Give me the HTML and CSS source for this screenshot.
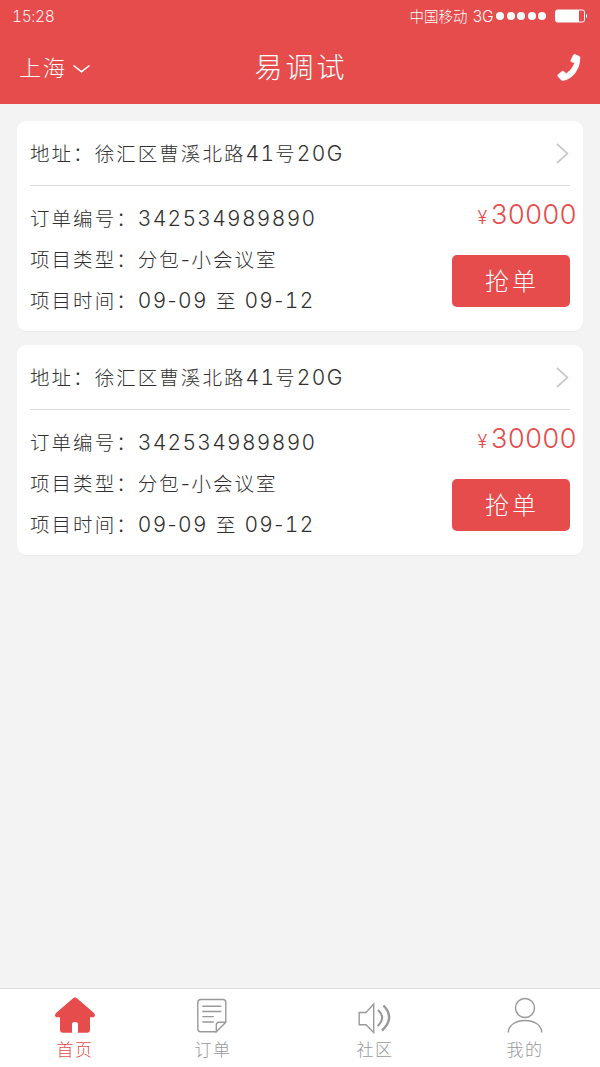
FILE: index.html
```html
<!DOCTYPE html>
<html lang="zh-CN">
<head>
<meta charset="utf-8">
<title>易调试</title>
<link rel="stylesheet" href="styles.css">
</head>
<body>
<div class="app">
  <header class="header">
    <div class="status">
      <span class="clock">15:28</span>
      <div class="signal">
        <span class="carrier">中国移动 <span class="net">3G</span></span>
        <span class="dots"><i></i><i></i><i></i><i></i><i></i></span>
        <svg class="battery" width="33" height="14" viewBox="0 0 33 14"><rect x=".5" y="1" width="29" height="12" rx="2" fill="none" stroke="#fff"/><path d="M2.5 1H24v12H2.5Q.5 13 .5 11V3Q.5 1 2.5 1Z" fill="#fff"/><path d="M31 5q1.2.3 1.2 2T31 9Z" fill="#fff"/></svg>
      </div>
    </div>
    <div class="nav">
      <div class="city"><span>上海</span><svg width="19" height="10" viewBox="0 0 19 10"><path d="M1.5 1.5L9.500 7.700L17.500 1.500" fill="none" stroke="#fff" stroke-width="1.500"/></svg></div>
      <h1 class="title">易调试</h1>
      <svg class="phone" width="24" height="28" viewBox="0 0 24 28"><path d="M18 .5L22 2.200Q23 2.700 23 4Q23 12 18.200 18.800Q13.500 25 6.300 26.500Q5 26.800 4.100 25.800L.9 22.300Q.2 21.400 1.100 20.500L5.100 17.400Q6 16.800 6.800 17.500L9.200 19.700Q15.500 15.500 17.600 8.800L14.500 7.800Q13.500 7.400 13.800 6.400L16.300 1.200Q16.800.2 18 .5Z" fill="#fff" stroke="#fff" stroke-width=".6"/></svg>
    </div>
  </header>
  <main class="list">
    <section class="card">
      <div class="address"><p class="row">地址：徐汇区曹溪北路<span class="num">41</span>号<span class="num">20G</span></p>
        <svg width="14" height="22" viewBox="0 0 14 22"><path d="M1 2L11.500 11.500L1 21" fill="none" stroke="#c9c9c9" stroke-width="1.700"/></svg></div>
      <div class="body">
        <div class="details">
          <p class="row">订单编号：<span class="num">342534989890</span></p>
          <p class="row">项目类型：分包<span class="dash">-</span>小会议室</p>
          <p class="row">项目时间：<span class="num">09<span class="dash">-</span>09</span><span class="to">至</span><span class="num">09<span class="dash">-</span>12</span></p>
        </div>
        <div class="side">
          <p class="price"><span class="yen">¥</span>30000</p>
          <button class="grab">抢单</button>
        </div>
      </div>
    </section>
    <section class="card">
      <div class="address"><p class="row">地址：徐汇区曹溪北路<span class="num">41</span>号<span class="num">20G</span></p>
        <svg width="14" height="22" viewBox="0 0 14 22"><path d="M1 2L11.500 11.500L1 21" fill="none" stroke="#c9c9c9" stroke-width="1.700"/></svg></div>
      <div class="body">
        <div class="details">
          <p class="row">订单编号：<span class="num">342534989890</span></p>
          <p class="row">项目类型：分包<span class="dash">-</span>小会议室</p>
          <p class="row">项目时间：<span class="num">09<span class="dash">-</span>09</span><span class="to">至</span><span class="num">09<span class="dash">-</span>12</span></p>
        </div>
        <div class="side">
          <p class="price"><span class="yen">¥</span>30000</p>
          <button class="grab">抢单</button>
        </div>
      </div>
    </section>
  </main>
  <nav class="tabs">
    <a class="tab active"><svg width="42" height="38" viewBox="0 0 42 38"><path d="M18.800 2.500Q21 .5 23.200 2.500L40 17Q41 18 40.900 19.500Q40.800 21.200 39 21.200H36V33.700Q36 36.700 33 36.700H24V28Q24 26 21 26Q18 26 18 28V36.700H9Q6 36.700 6 33.700V21.200H3Q1 21.200 1 19.500Q1 18 2 17Z" fill="#e64c4c"/></svg><span>首页</span></a>
    <a class="tab"><svg width="32" height="38" viewBox="0 0 32 38" fill="none" stroke="#999" stroke-width="1.400"><path transform="translate(-1.200)" d="M20.500 35.700H5Q2 35.700 2 32.700V6.500Q2 3.500 5 3.500H27Q30 3.500 30 6.500V26.200L20.500 35.700V29Q20.500 26.200 23.500 26.200H30M6.500 10.300H25.500M6.500 15.500H25.500M6.500 20.600H18M6.500 26H18"/></svg><span>订单</span></a>
    <a class="tab"><svg width="36" height="38" viewBox="0 0 36 38" fill="none" stroke="#999" stroke-width="1.400"><path d="M2.200 16.500H9L16.700 8V36.500L9 28.800H2.200Z"/><path d="M21 14Q29.500 22 20.500 30" stroke-width="2.100"/><path d="M26.500 9.500Q38.500 22 25 34.500" stroke-width="2.500"/></svg><span>社区</span></a>
    <a class="tab"><svg width="36" height="38" viewBox="0 0 36 38" fill="none" stroke="#999" stroke-width="1.400"><circle cx="18" cy="12" r="9.500"/><path d="M1.300 36.500C1.300 20.500 34.700 20.500 34.700 36.500"/></svg><span>我的</span></a>
  </nav>
</div>
</body>
</html>
```
FILE: styles.css
```css
* { box-sizing: border-box; }
body { margin: 0; background: #f3f3f3; font-family: "Noto Sans CJK SC", sans-serif; font-weight: 300; color: #303030; }
p, h1 { margin: 0; font-weight: 300; }
svg { display: block; flex: none; }
.app { height: 1067px; display: flex; flex-direction: column; }

.header { height: 104px; flex: none; background: #e64c4c; color: #fff; }
.status { height: 32px; padding: 0 12px 0 12px; display: flex; justify-content: space-between; align-items: center; }
.clock { font: 300 15.500px Inter, sans-serif; font-feature-settings: "tnum"; letter-spacing: -.400px; opacity: .9; }
.signal { display: flex; align-items: center; font-size: 14.500px; }
.carrier { width: 86px; margin-right: 1px; white-space: nowrap; padding-bottom: 2px; }
.net { font-family: Inter, sans-serif; font-size: 15.500px; margin-left: 2px; line-height: 1; }
.dots { display: flex; gap: 2.400px; margin-right: 9px; }
.dots i { width: 8px; height: 8px; border-radius: 50%; background: #fff; }
.nav { height: 69px; display: grid; grid-template-columns: 1fr auto 1fr; align-items: center; padding: 0 19px; }
.city { display: flex; align-items: center; gap: 5px; font-size: 22px; letter-spacing: 2px; padding-bottom: 2px; }
.city svg { margin-top: 6px; }
.title { font-size: 28px; letter-spacing: 3px; margin-right: -2px; padding-bottom: 2px; }
.phone { justify-self: end; margin-top: 2px; }

.list { flex: 1; padding: 17px 17px 0; display: flex; flex-direction: column; gap: 14px; }
.card { height: 210px; background: #fff; border-radius: 9px; padding: 0 13px; box-shadow: 0 1px 1px #eaeaea; }
.address { height: 65px; border-bottom: 1px solid #ddd; display: flex; align-items: center; justify-content: space-between; }
.address .row { margin-top: -2px; }
.row { height: 41px; font-size: 19.500px; letter-spacing: 2.050px; line-height: 41px; white-space: nowrap; }
.num { font-family: Inter, sans-serif; font-feature-settings: "tnum"; font-size: 21px; letter-spacing: 1.300px; line-height: 1; }
.dash { font-family: Inter, sans-serif; font-feature-settings: normal; font-size: 20px; line-height: 1; letter-spacing: 1.500px; }
.to { margin: 0 7px 0 8px; }
.body { display: flex; justify-content: space-between; padding-top: 11px; }
.side { width: 118px; display: flex; flex-direction: column; }
.price { height: 36px; font: 300 27px/36px Inter, sans-serif; color: #e64c4c; align-self: flex-end; margin-right: -7px; letter-spacing: .600px; }
.yen { font-size: 18px; margin-right: 3px; }
.grab { height: 52px; margin-top: 22px; padding: 0 0 4px 2px; border: 0; border-radius: 5px; background: #e64c4c; color: #fff; font: 300 24px "Noto Sans CJK SC", sans-serif; letter-spacing: 3px; }

.tabs { height: 79px; border-top: 1px solid #dcdcdc; background: #fff; display: flex; justify-content: space-between; padding: 7px 54px 0; }
.tab { width: 42px; display: flex; flex-direction: column; align-items: center; color: #999; font-size: 17px; letter-spacing: 1.500px; line-height: 30px; white-space: nowrap; }
.tab:nth-child(2) { margin-right: 12px; margin-left: -12px; }
.active { color: #e64c4c; }
```
